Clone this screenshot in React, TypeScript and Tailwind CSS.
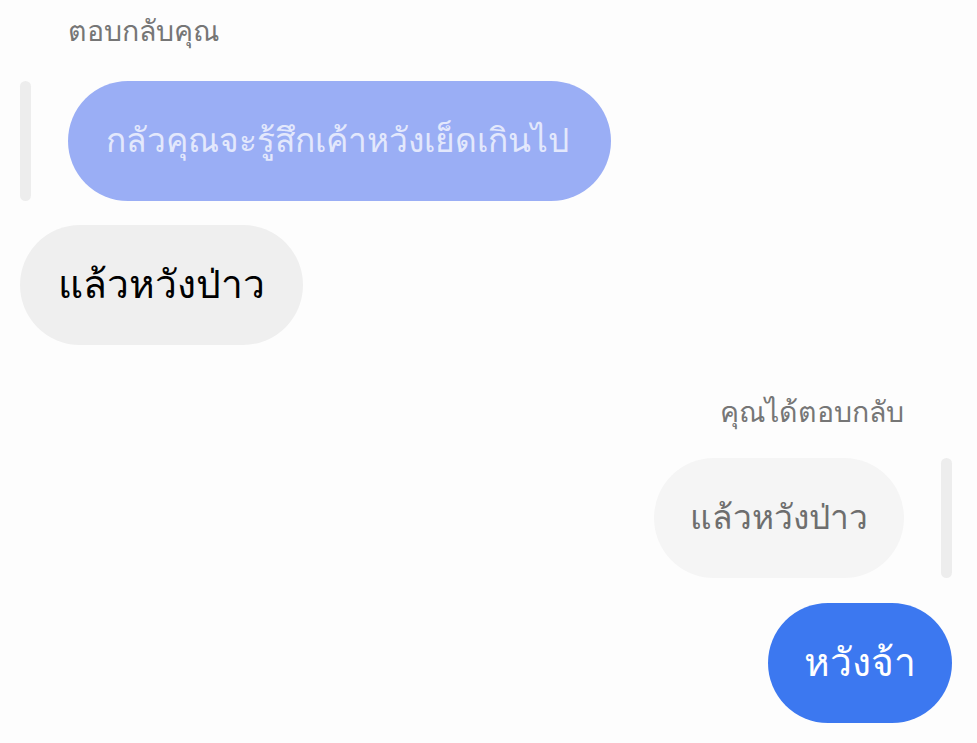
import React from 'react';

export default function App() {
  return (
    <div className="h-[743px] w-[977px] overflow-hidden bg-[#fdfdfd] font-['Liberation_Sans',sans-serif]">
      <div className="flex flex-col pt-[10px]">
        {/* incoming reply */}
        <div className="pl-[68px] text-[28.5px] leading-[42px] text-[#767676]">ตอบกลับคุณ</div>
        <div className="mt-[29px] flex items-stretch pl-[20px]">
          <div className="w-[11px] rounded-full bg-[#ededed]" />
          <div className="ml-[37px] flex h-[120px] items-center rounded-full bg-[#9aaef5] pl-[38px] pr-[42px] text-[33.5px] text-[#e3e8fc]">
            กลัวคุณจะรู้สึกเค้าหวังเย็ดเกินไป
          </div>
        </div>
        <div className="mt-[24px] flex pl-[20px]">
          <div className="flex h-[120px] items-center rounded-full bg-[#efefef] px-[38px] text-[39px] text-black">
            แล้วหวังป่าว
          </div>
        </div>

        {/* outgoing reply */}
        <div className="mt-[46px] pr-[73px] text-right text-[28.5px] leading-[42px] text-[#767676]">คุณได้ตอบกลับ</div>
        <div className="mt-[25px] flex justify-end pr-[25px]">
          <div className="flex h-[120px] items-center rounded-full bg-[#f5f5f5] px-[36px] text-[33.5px] text-[#6e6e6e]">
            แล้วหวังป่าว
          </div>
          <div className="ml-[37px] w-[11px] rounded-full bg-[#ededed]" />
        </div>
        <div className="mt-[25px] flex justify-end pr-[25px]">
          <div className="flex h-[120px] items-center rounded-full bg-[#3c78f0] px-[36px] text-[39px] text-white">
            หวังจ้า
          </div>
        </div>
      </div>
    </div>
  );
}
